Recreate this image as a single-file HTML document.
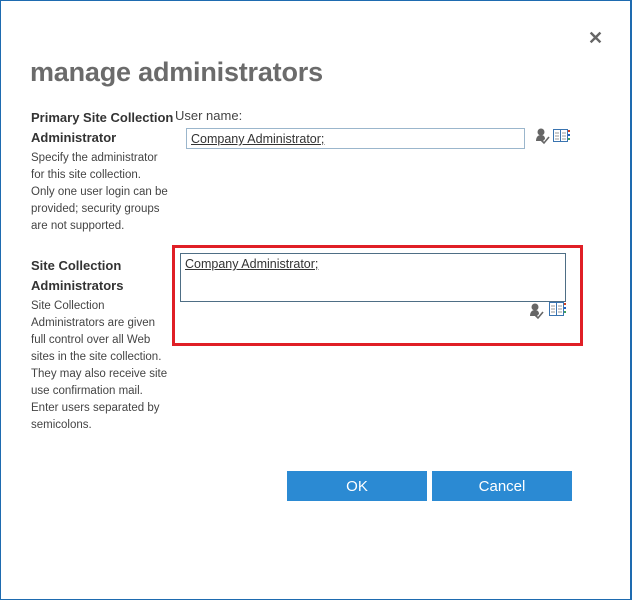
<!DOCTYPE html>
<html><head><style>
*{margin:0;padding:0;box-sizing:border-box}
body{width:632px;height:600px;background:#fff;font-family:"Liberation Sans",sans-serif;position:relative;overflow:hidden}
.frame{position:absolute;left:0;top:0;width:632px;height:600px;border:1px solid #1e6bb0;border-right:2px solid #1e6bb0}
.a{position:absolute}
h1{position:absolute;left:30px;top:57px;font-size:27px;font-weight:bold;color:#6b6b6b;letter-spacing:-0.2px}
.h{font-size:13px;font-weight:bold;color:#333;line-height:20px}
.p{font-size:11.5px;color:#444;line-height:17px}
.u{font-size:12.5px;color:#333;text-decoration:underline}
.btn{position:absolute;top:471px;width:140px;height:30px;background:#2b8ad3;color:#fff;font-size:15px;text-align:center;line-height:31px}
</style></head><body>
<div class="frame"></div>
<div class="a" style="left:588px;top:28px;font-size:18px;color:#666;font-weight:bold">✕</div>
<h1>manage administrators</h1>
<div class="a h" style="left:31px;top:108px">Primary Site Collection<br>Administrator</div>
<div class="a p" style="left:31px;top:150px">Specify the administrator<br>for this site collection.<br>Only one user login can be<br>provided; security groups<br>are not supported.</div>
<div class="a" style="left:175px;top:108px;font-size:13px;color:#444">User name:</div>
<div class="a" style="left:186px;top:128px;width:339px;height:21px;border:1px solid #9bb6cc"></div>
<div class="a u" style="left:191px;top:132px">Company Administrator;</div>
<svg class="a" style="left:535px;top:127px" width="40" height="20" viewBox="0 0 40 20">
<circle cx="6" cy="5" r="3.5" fill="#666"/><path d="M1 14c0-4 2-6 5-6s4 2 4 4l-2 2z" fill="#666"/><path d="M6 13l3 3 5-6" stroke="#666" stroke-width="1.6" fill="none"/>
<rect x="18.5" y="2.5" width="14" height="12" fill="none" stroke="#3a74b0"/><line x1="25.5" y1="2" x2="25.5" y2="15" stroke="#3a74b0"/>
<path d="M20 6h4M20 9h4M20 12h4M27 6h4M27 9h4M27 12h4" stroke="#999"/>
<rect x="33" y="3" width="2" height="2" fill="#d04020"/><rect x="33" y="7" width="2" height="2" fill="#2060c0"/><rect x="33" y="11" width="2" height="2" fill="#40a060"/>
</svg>
<div class="a h" style="left:31px;top:256px">Site Collection<br>Administrators</div>
<div class="a p" style="left:31px;top:298px">Site Collection<br>Administrators are given<br>full control over all Web<br>sites in the site collection.<br>They may also receive site<br>use confirmation mail.<br>Enter users separated by<br>semicolons.</div>
<div class="a" style="left:172px;top:245px;width:411px;height:101px;border:3px solid #e01f26"></div>
<div class="a" style="left:180px;top:253px;width:386px;height:49px;border:1px solid #4e6e85"></div>
<div class="a u" style="left:185px;top:257px">Company Administrator;</div>
<svg class="a" style="left:529px;top:302px" width="40" height="20" viewBox="0 0 40 20">
<circle cx="6" cy="5" r="3.5" fill="#666"/><path d="M1 14c0-4 2-6 5-6s4 2 4 4l-2 2z" fill="#666"/><path d="M6 13l3 3 5-6" stroke="#666" stroke-width="1.6" fill="none"/>
<rect x="20.5" y="0.5" width="14" height="13" fill="none" stroke="#3a74b0"/><line x1="27.5" y1="0" x2="27.5" y2="14" stroke="#3a74b0"/>
<path d="M22 4h4M22 7h4M22 10h4M29 4h4M29 7h4M29 10h4" stroke="#999"/>
<rect x="35" y="1" width="2" height="2" fill="#d04020"/><rect x="35" y="5" width="2" height="2" fill="#2060c0"/><rect x="35" y="9" width="2" height="2" fill="#40a060"/>
</svg>
<div class="btn" style="left:287px">OK</div>
<div class="btn" style="left:432px">Cancel</div>
</body></html>
